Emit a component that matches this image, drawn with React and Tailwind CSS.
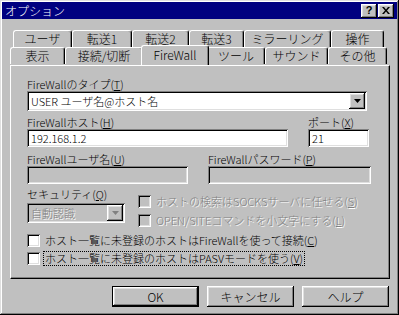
import React from 'react';

const raised = 'shadow-[inset_-1px_-1px_#000,inset_1px_1px_#fff,inset_-2px_-2px_#808080,inset_2px_2px_#dfdfdf]';
const sunken = 'shadow-[inset_1px_1px_#808080,inset_-1px_-1px_#fff,inset_2px_2px_#000,inset_-2px_-2px_#dfdfdf]';
const dim = 'text-[#808080] [text-shadow:1px_1px_0_#fff]';

const row1 = [
  { label: 'ユーザ', w: 'w-[59px]' },
  { label: '転送1', w: 'w-[60px]' },
  { label: '転送2', w: 'w-[57px]' },
  { label: '転送3', w: 'w-[55px]' },
  { label: 'ミラーリング', w: 'w-[87px]' },
  { label: '操作', w: 'w-[53px]' },
];

const row2 = [
  { label: '表示', w: 'w-[55px]' },
  { label: '接続/切断', w: 'w-[78px]' },
  { label: 'FireWall', w: 'w-[68px]', active: true },
  { label: 'ツール', w: 'w-[58px]' },
  { label: 'サウンド', w: 'w-[63px]' },
  { label: 'その他', w: 'w-[59px]' },
];

const Tab = ({ label, w, active }) => (
  <div
    className={`${w} ${active ? 'relative z-10 -mx-[2px] -mt-[2px] h-[20px] pb-[2px] bg-[#c0c0c0]' : 'h-[17px]'} flex items-center justify-center border-l border-t border-white border-r border-r-black rounded-t-[3px] shadow-[inset_-1px_0_#808080] leading-none`}
  >
    {label}
  </div>
);

const Key = ({ k }) => (
  <>(<span className="underline underline-offset-1">{k}</span>)</>
);

const Arrow = ({ disabled }) => (
  <div className={`w-[16px] h-[16px] bg-[#c0c0c0] ${raised} flex items-center justify-center`}>
    <svg width="7" height="4" viewBox="0 0 7 4">
      <path d="M0 0h7L3.5 4z" fill={disabled ? '#808080' : '#000'} />
    </svg>
  </div>
);

const Check = ({ children, disabled, focus, className = '' }) => (
  <div className={`flex items-center h-[13px] ${className}`}>
    <div className={`w-[13px] h-[13px] shrink-0 ${disabled ? 'bg-[#c0c0c0]' : 'bg-white'} ${sunken}`} />
    <span
      className={`ml-[4px] px-[1px] leading-[13px] whitespace-nowrap ${disabled ? dim : ''} ${focus ? 'outline outline-1 outline-dotted outline-black' : ''}`}
    >
      {children}
    </span>
  </div>
);

export default function App() {
  return (
    <div className="w-[399px] h-[315px] bg-[#c0c0c0] p-[2px] shadow-[inset_-1px_-1px_#000,inset_1px_1px_#dfdfdf,inset_-2px_-2px_#808080,inset_2px_2px_#fff] font-['Noto_Sans_CJK_JP',sans-serif] font-light text-[11px] text-black select-none">
      {/* title bar */}
      <div className="h-[17px] bg-[#000080] flex items-center justify-between pl-[3px] pr-[3px]">
        <span className="text-white text-[12px] leading-none">オプション</span>
        <div className="flex gap-[1px]">
          <div className={`w-[16px] h-[14px] bg-[#c0c0c0] ${raised} flex items-center justify-center font-['Liberation_Sans',sans-serif] font-bold text-[11px] leading-none`}>
            ?
          </div>
          <div className={`w-[16px] h-[14px] bg-[#c0c0c0] ${raised} flex items-center justify-center`}>
            <svg width="8" height="7" viewBox="0 0 8 7">
              <path d="M0 0h2l2 2.5L6 0h2L5 3.5 8 7H6L4 4.5 2 7H0l3-3.5z" fill="#000" />
            </svg>
          </div>
        </div>
      </div>

      {/* tabs */}
      <div className="mt-[11px] ml-[11px] flex text-[12px]">
        {row1.map((t) => (
          <Tab key={t.label} {...t} />
        ))}
      </div>
      <div className="ml-[8px] flex text-[12px]">
        {row2.map((t) => (
          <Tab key={t.label} {...t} />
        ))}
      </div>

      {/* panel */}
      <div className="ml-[8px] w-[380px] h-[214px] border-t border-l border-white border-r border-b border-r-black border-b-black shadow-[inset_-1px_-1px_#808080] pl-[16px] pt-[12px]">
        <div className="h-[12px] leading-[12px]">
          FireWallのタイプ<Key k="T" />
        </div>
        <div className={`mt-[1px] w-[340px] h-[20px] bg-white ${sunken} flex items-center justify-between pl-[4px] pr-[2px]`}>
          <span>USER ユーザ名@ホスト名</span>
          <Arrow />
        </div>

        <div className="mt-[5px] flex">
          <div className="w-[281px]">
            <div className="h-[12px] leading-[12px]">
              FireWallホスト<Key k="H" />
            </div>
            <div className={`mt-[1px] w-[261px] h-[18px] bg-white ${sunken} flex items-center pl-[4px]`}>192.168.1.2</div>
          </div>
          <div>
            <div className="h-[12px] leading-[12px]">
              ポート<Key k="X" />
            </div>
            <div className={`mt-[1px] w-[61px] h-[18px] bg-white ${sunken} flex items-center pl-[4px]`}>21</div>
          </div>
        </div>

        <div className="mt-[6px] flex">
          <div className="w-[181px]">
            <div className="h-[12px] leading-[12px]">
              FireWallユーザ名<Key k="U" />
            </div>
            <div className={`mt-[1px] w-[161px] h-[18px] ${sunken}`} />
          </div>
          <div>
            <div className="h-[12px] leading-[12px]">
              FireWallパスワード<Key k="P" />
            </div>
            <div className={`mt-[1px] w-[163px] h-[18px] ${sunken}`} />
          </div>
        </div>

        <div className="mt-[4px] flex">
          <div className="w-[111px]">
            <div className="h-[12px] leading-[12px]">
              セキュリティ<Key k="Q" />
            </div>
            <div className={`mt-[3px] w-[98px] h-[20px] ${sunken} flex items-center justify-between pl-[4px] pr-[2px]`}>
              <span className={dim}>自動認識</span>
              <Arrow disabled />
            </div>
          </div>
          <div className="pt-[7px]">
            <Check disabled>
              ホストの検索はSOCKSサーバに任せる<Key k="S" />
            </Check>
            <Check disabled className="mt-[6px]">
              OPEN/SITEコマンドを小文字にする<Key k="L" />
            </Check>
          </div>
        </div>

        <Check className="mt-[7px]">
          ホスト一覧に未登録のホストはFireWallを使って接続<Key k="C" />
        </Check>
        <Check focus className="mt-[5px]">
          ホスト一覧に未登録のホストはPASVモードを使う<Key k="V" />
        </Check>
      </div>

      {/* buttons */}
      <div className="mt-[7px] flex justify-end gap-[8px] pr-[8px] text-[12px]">
        <div className={`w-[87px] h-[21px] border border-black ${raised} flex items-center justify-center`}>OK</div>
        <div className={`w-[87px] h-[21px] ${raised} flex items-center justify-center`}>キャンセル</div>
        <div className={`w-[87px] h-[21px] ${raised} flex items-center justify-center`}>ヘルプ</div>
      </div>
    </div>
  );
}
